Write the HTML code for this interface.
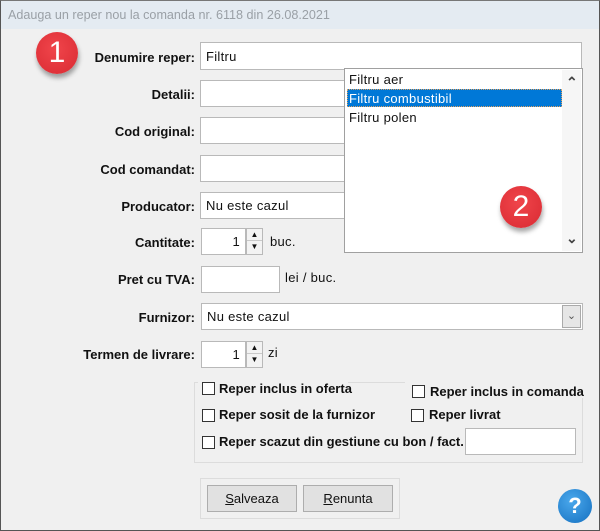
<!DOCTYPE html>
<html><head><style>
*{box-sizing:border-box;margin:0;padding:0}
body{width:600px;height:531px;overflow:hidden;background:#f0f0f0;font-family:"Liberation Sans",Arial,sans-serif;position:relative}
.a{position:absolute}
.frame{left:0;top:0;width:600px;height:531px;border:1px solid #555;border-top-color:#777}
.title{left:1px;top:1px;width:598px;height:28px;background:#e4ebf2;color:#9aa0a6;font-size:12.6px;padding:7px 0 0 7px}
.lbl{font-weight:bold;font-size:13px;color:#111;text-align:right;width:190px;left:5px}
.in{background:#fff;border:1px solid #b9b9b9;font-size:13px;color:#111;padding:0 5px;display:flex;align-items:center;letter-spacing:.3px}
.badge{border-radius:50%;background:radial-gradient(circle at 45% 40%,#f0454b,#d92a32);color:#fff;font-size:30px;text-align:center;box-shadow:1px 4px 5px rgba(0,0,0,.35);font-family:"Liberation Sans",sans-serif}
.spin{width:17px;height:26px;border:1px solid #b9b9b9;background:#f3f3f3}
.spin div{height:12px;font-size:8px;text-align:center;line-height:12px;color:#111;border-bottom:1px solid #c9c9c9}
.t{font-size:13px;color:#111;letter-spacing:.3px}
.cb{width:13px;height:13px;border:1px solid #333;background:#fff}
.ct{font-weight:bold;font-size:13px;color:#111}
.btn{height:27px;border:1px solid #adadad;background:#e1e1e1;font-size:13px;color:#111;text-align:center;line-height:25px}
.chev{font-size:14px;color:#444;font-weight:bold}
</style></head><body>
<div class="a frame"></div>
<div class="a title">Adauga un reper nou la comanda nr. 6118 din 26.08.2021</div>

<div class="a badge" style="left:36px;top:32px;width:42px;height:42px;line-height:42px">1</div>

<div class="a lbl" style="top:50px">Denumire reper:</div>
<div class="a in" style="left:200px;top:42px;width:382px;height:28px">Filtru</div>
<div class="a lbl" style="top:87px">Detalii:</div>
<div class="a in" style="left:200px;top:80px;width:160px;height:27px"></div>
<div class="a lbl" style="top:124px">Cod original:</div>
<div class="a in" style="left:200px;top:117px;width:160px;height:27px"></div>
<div class="a lbl" style="top:162px">Cod comandat:</div>
<div class="a in" style="left:200px;top:155px;width:160px;height:27px"></div>
<div class="a lbl" style="top:199px">Producator:</div>
<div class="a in" style="left:200px;top:192px;width:160px;height:27px">Nu este cazul</div>
<div class="a" style="left:580px;top:192px;width:3px;height:27px;background:#e8e8e8;border-right:1px solid #b9b9b9"></div>

<div class="a lbl" style="top:235px">Cantitate:</div>
<div class="a in" style="left:201px;top:228px;width:45px;height:27px;justify-content:flex-end">1</div>
<div class="a spin" style="left:246px;top:228px;height:27px"><div>▲</div><div style="border:0">▼</div></div>
<div class="a t" style="left:270px;top:234px">buc.</div>

<div class="a lbl" style="top:272px">Pret cu TVA:</div>
<div class="a in" style="left:201px;top:266px;width:79px;height:27px"></div>
<div class="a t" style="left:285px;top:270px">lei / buc.</div>

<div class="a lbl" style="top:310px">Furnizor:</div>
<div class="a in" style="left:201px;top:303px;width:382px;height:27px">Nu este cazul</div>
<div class="a" style="left:562px;top:305px;width:19px;height:23px;background:#e6e6e6;border:1px solid #aaa;font-size:11px;text-align:center;line-height:21px;color:#555">&#8964;</div>

<div class="a lbl" style="top:347px">Termen de livrare:</div>
<div class="a in" style="left:201px;top:341px;width:45px;height:27px;justify-content:flex-end">1</div>
<div class="a spin" style="left:246px;top:341px;height:27px"><div>▲</div><div style="border:0">▼</div></div>
<div class="a t" style="left:268px;top:345px">zi</div>

<!-- popup -->
<div class="a" style="left:344px;top:68px;width:239px;height:185px;background:#fff;border:1px solid #a0a0a0"></div>
<div class="a" style="left:562px;top:70px;width:19px;height:181px;background:#f6f6f6"></div>
<div class="a chev" style="left:566px;top:74px">&#8963;</div>
<div class="a chev" style="left:566px;top:230px">&#8964;</div>
<div class="a t" style="left:349px;top:72px">Filtru aer</div>
<div class="a" style="left:347px;top:89px;width:215px;height:18px;background:#0078d7;border:1px dotted #e0a060"></div>
<div class="a t" style="left:349px;top:91px;color:#fff">Filtru combustibil</div>
<div class="a t" style="left:349px;top:110px">Filtru polen</div>
<div class="a badge" style="left:500px;top:186px;width:42px;height:42px;line-height:42px">2</div>

<!-- group -->
<div class="a" style="left:194px;top:382px;width:389px;height:81px;border:1px solid #dcdcdc"></div>
<div class="a" style="left:198px;top:378px;width:150px;height:12px;background:#f0f0f0"></div>
<div class="a" style="left:405px;top:380px;width:180px;height:18px;background:#f0f0f0"></div>
<div class="a cb" style="left:202px;top:382px"></div><div class="a ct" style="left:219px;top:381px">Reper inclus in oferta</div>
<div class="a cb" style="left:412px;top:385px"></div><div class="a ct" style="left:430px;top:384px">Reper inclus in comanda</div>
<div class="a cb" style="left:202px;top:409px"></div><div class="a ct" style="left:219px;top:407px">Reper sosit de la furnizor</div>
<div class="a cb" style="left:411px;top:409px"></div><div class="a ct" style="left:429px;top:407px">Reper livrat</div>
<div class="a cb" style="left:202px;top:436px"></div><div class="a ct" style="left:219px;top:434px">Reper scazut din gestiune cu bon / fact.</div>
<div class="a in" style="left:465px;top:428px;width:111px;height:27px"></div>

<!-- buttons -->
<div class="a" style="left:200px;top:478px;width:200px;height:41px;border:1px solid #dcdcdc"></div>
<div class="a btn" style="left:207px;top:485px;width:90px"><u>S</u>alveaza</div>
<div class="a btn" style="left:303px;top:485px;width:90px"><u>R</u>enunta</div>

<div class="a" style="left:558px;top:489px;width:34px;height:34px;border-radius:50%;background:radial-gradient(circle at 40% 35%,#4aa8ec,#1570c0);color:#fff;font-weight:bold;font-size:22px;text-align:center;line-height:34px">?</div>
</body></html>
